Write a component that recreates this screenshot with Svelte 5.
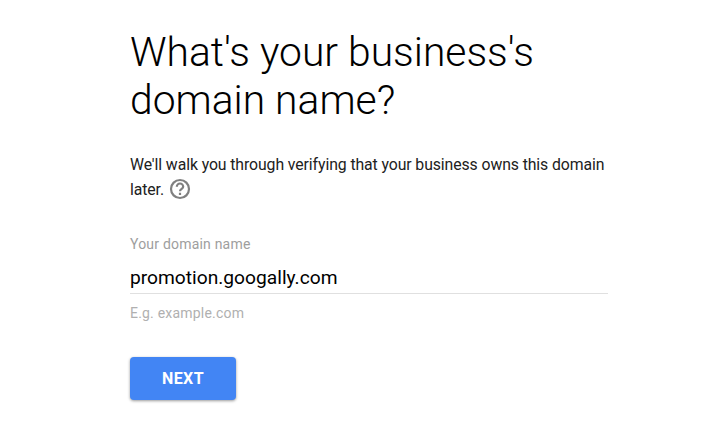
<script>
  let domain = $state('promotion.googally.com');
</script>

<main>
  <h1>What's your business's<br />domain name?</h1>
  <p class="intro">
    We'll walk you through verifying that your business owns this domain<br />later.
    <svg class="help" viewBox="0 0 24 24" aria-label="Help">
      <circle cx="12" cy="12" r="9" />
      <path d="M8.8 9.7a3.2 3.2 0 1 1 6.4 0c0 2.1-3.2 2.2-3.2 4.6M12 15.8v2.2" />
    </svg>
  </p>
  <label for="domain">Your domain name</label>
  <input id="domain" type="text" bind:value={domain} spellcheck="false" />
  <div class="hint">E.g. example.com</div>
  <button type="button">NEXT</button>
</main>

<style>
  :global(body) {
    background: #fff;
  }
  main {
    box-sizing: border-box;
    width: 717px;
    height: 426px;
    padding: 28px 109px 0 130px;
    overflow: hidden;
    font-family: Roboto, 'Liberation Sans', sans-serif;
    color: #212121;
  }
  h1 {
    margin: 0;
    font-size: 40.8px;
    font-weight: 300;
    line-height: 48px;
    color: #000;
    white-space: nowrap;
  }
  .intro {
    height: 50px;
    margin: 28px 0 0;
    font-size: 15.8px;
    letter-spacing: -0.09px;
    line-height: 25px;
    white-space: nowrap;
  }
  .help {
    width: 24px;
    height: 24px;
    margin: -8px 0 -4px 0.5px;
    vertical-align: -2px;
    fill: none;
    stroke: #808080;
    stroke-width: 2.2;
  }
  label {
    display: block;
    margin-top: 34px;
    font-size: 14px;
    letter-spacing: 0.2px;
    line-height: 16px;
    color: #9e9e9e;
  }
  input {
    display: block;
    box-sizing: border-box;
    width: 478px;
    height: 42px;
    margin: 0;
    padding: 10px 0 0;
    border: 0;
    border-bottom: 1px solid #e0e0e0;
    outline: none;
    background: transparent;
    font: 400 19.2px/28px Roboto, sans-serif;
    color: #000;
  }
  .hint {
    margin-top: 11px;
    font-size: 14px;
    letter-spacing: 0.2px;
    line-height: 16px;
    color: #b0b0b0;
  }
  button {
    display: block;
    width: 106px;
    height: 43px;
    margin-top: 36px;
    padding: 0;
    border: 0;
    border-radius: 4px;
    background: #4285f4;
    box-shadow: 0 1px 3px rgba(0, 0, 0, 0.4);
    font: 700 16px/43px Roboto, sans-serif;
    letter-spacing: 0.4px;
    color: #fff;
  }
</style>
